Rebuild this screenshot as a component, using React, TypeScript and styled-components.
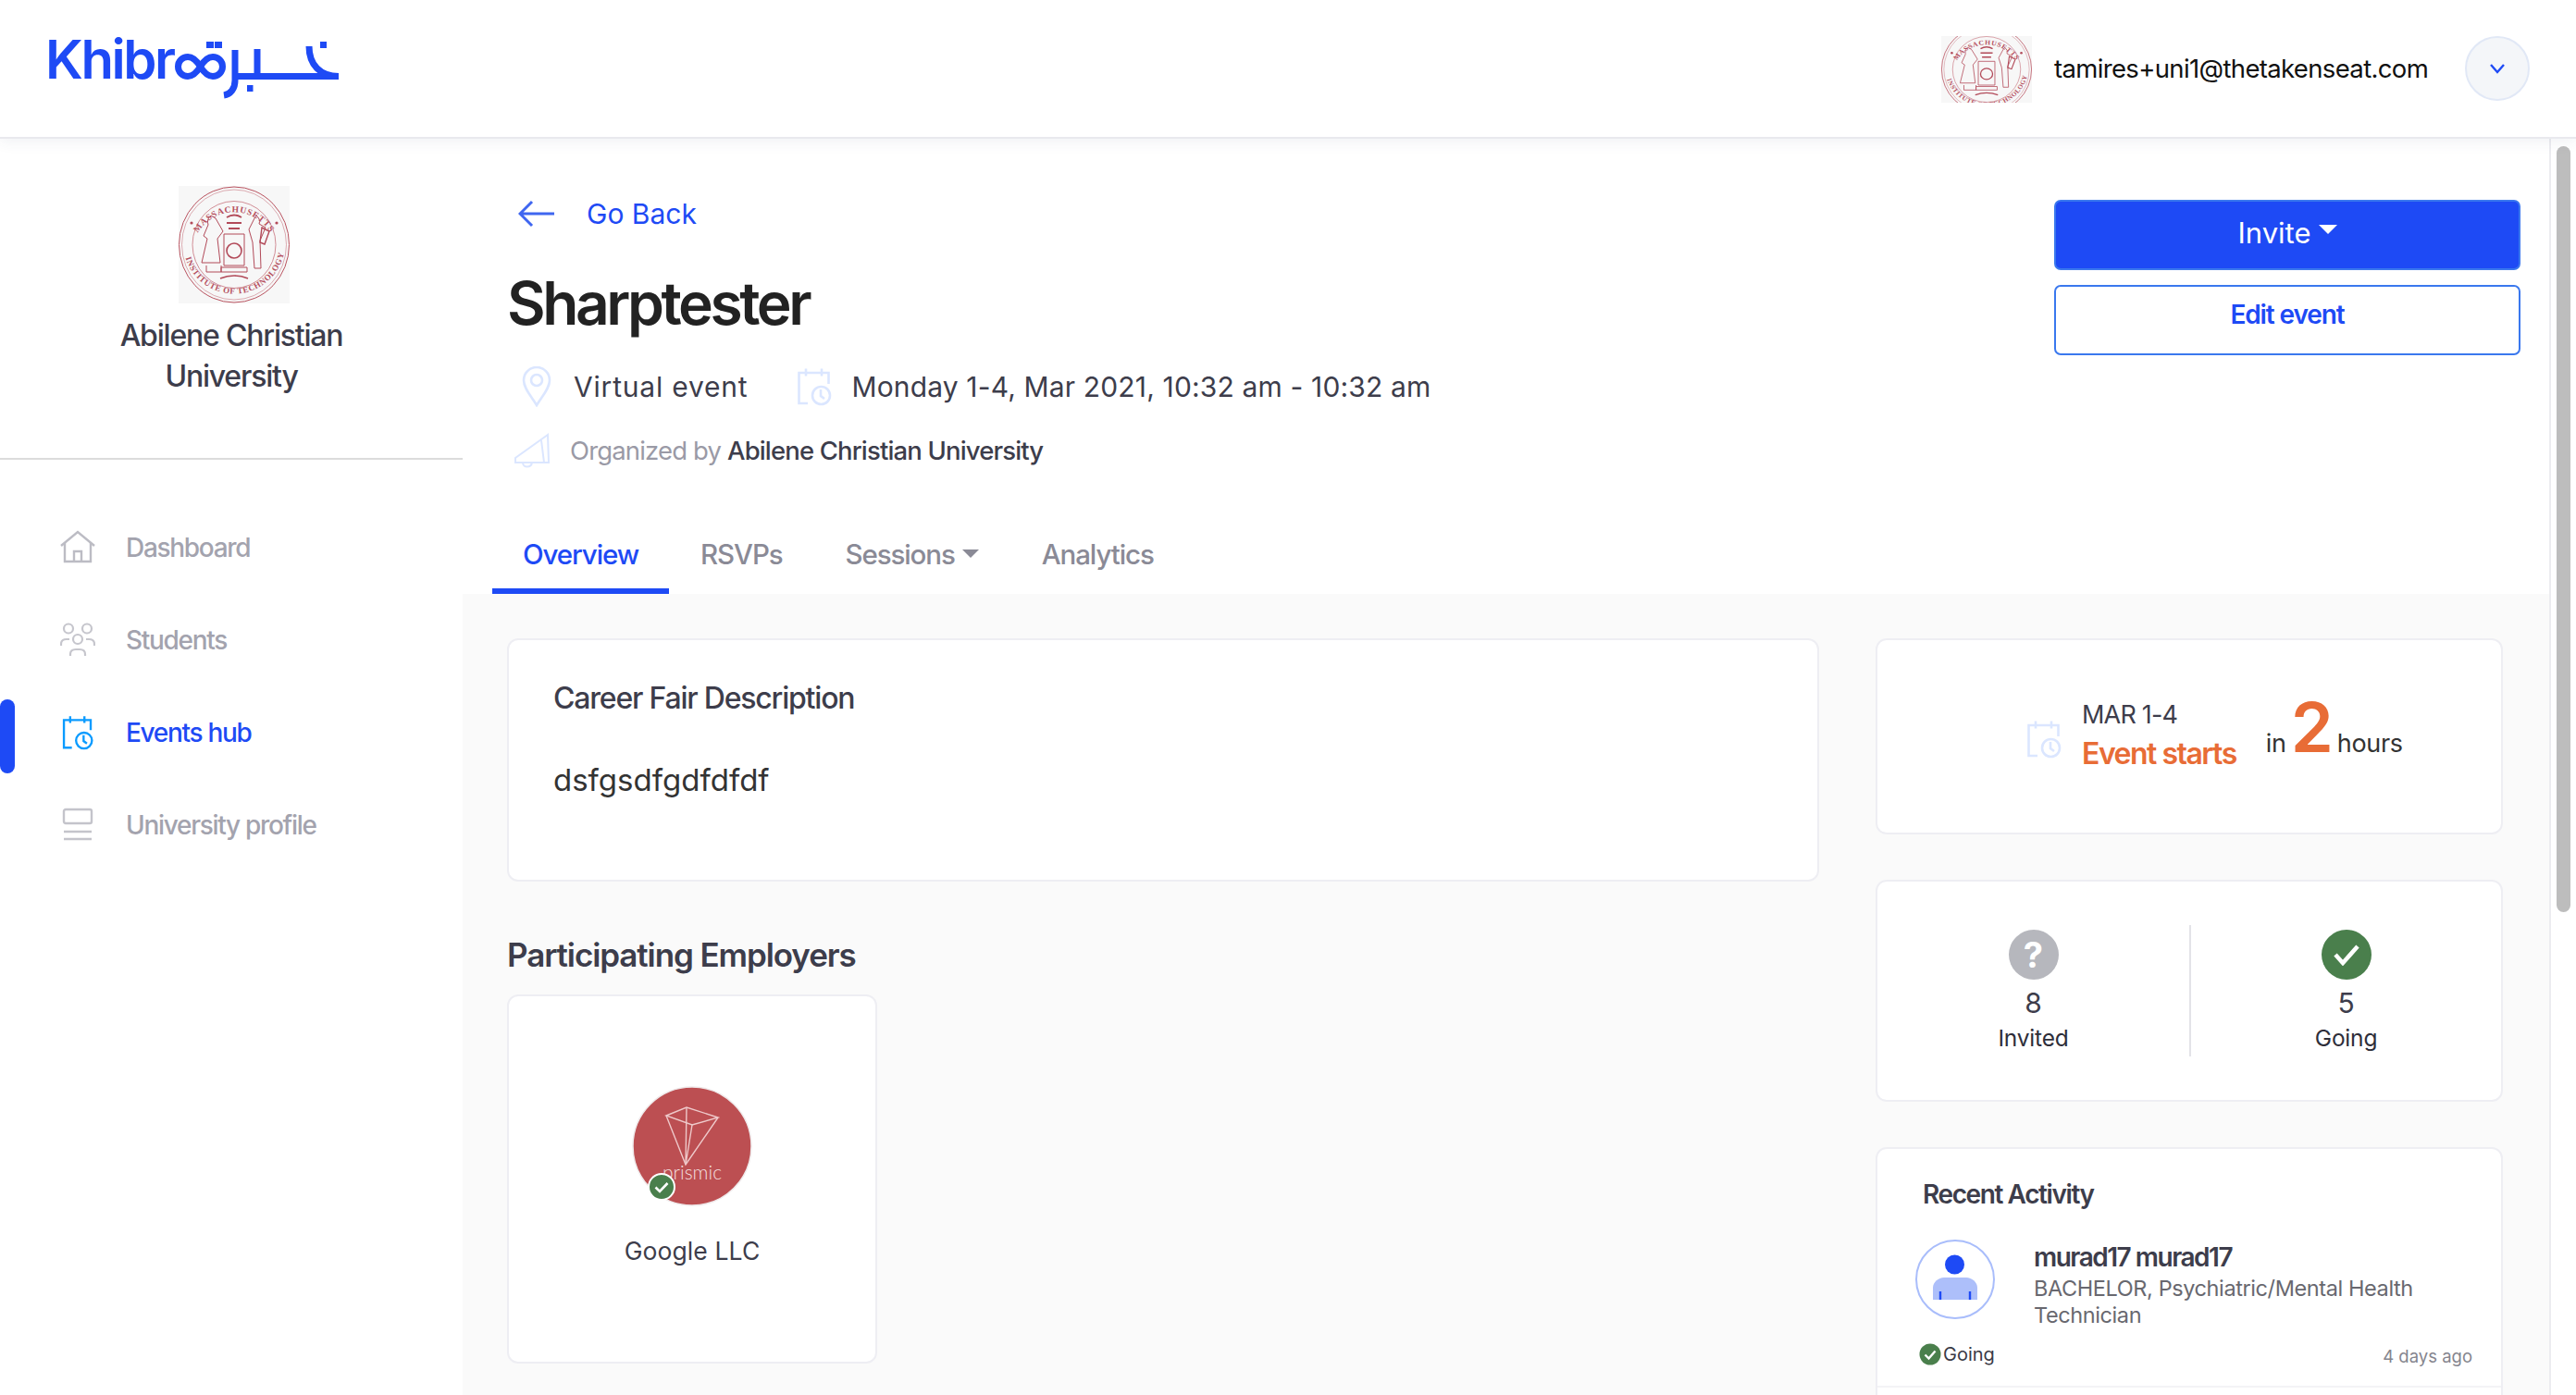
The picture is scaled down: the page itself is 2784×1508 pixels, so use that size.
import { FC } from 'react'
import styled, { createGlobalStyle } from 'styled-components'

const BLUE = '#1e4af5'
const PALE = '#dbe6ff'
const INK = '#3d3d4b'

const GlobalStyle = createGlobalStyle`
  html, body {
    margin: 0;
    height: 100%;
    overflow: hidden;
    background: #fff;
    font-family: Inter, "Liberation Sans", sans-serif;
  }
  * { box-sizing: border-box; }
`

const Seal: FC<{ className?: string }> = ({ className }) => (
  <svg className={className} viewBox="0 0 120 127" preserveAspectRatio="none">
    <defs>
      <path id="seal-top" d="M14 68 A47 50 0 0 1 106 68" />
      <path id="seal-bottom" d="M6 72 A55 55 0 0 0 114 72" />
    </defs>
    <ellipse cx="60" cy="63.5" rx="59.5" ry="62.5" fill="none" stroke="#b9525f" strokeWidth="1" />
    <ellipse cx="60" cy="63.5" rx="56.5" ry="59.5" fill="none" stroke="#c77782" strokeWidth="0.6" />
    <ellipse cx="60" cy="63.5" rx="45" ry="47" fill="none" stroke="#c0606c" strokeWidth="0.7" />
    <text fontFamily="'Liberation Serif', serif" fontSize="9.5" fontWeight="700" fill="#b5505e" letterSpacing="0.8">
      <textPath href="#seal-top" startOffset="14%">MASSACHUSETTS</textPath>
    </text>
    <text fontFamily="'Liberation Serif', serif" fontSize="9" fontWeight="700" fill="#b5505e" letterSpacing="0.6">
      <textPath href="#seal-bottom" startOffset="4%">INSTITUTE OF TECHNOLOGY</textPath>
    </text>
    <g fill="none" stroke="#b24a59" strokeWidth="1">
      <path d="M49 52h22v34H49zM46 88h28v5H46z" />
      <circle cx="60" cy="70" r="8" strokeWidth="1.6" />
      <path d="M52 40h16M54 46h12M52 34q8 -5 16 0" strokeWidth="1.8" />
      <path d="M35 32q-5 4 -3 10l-5 12 4 3-6 26h20l-3-26 6-8-8-14zM30 86v7h16v-7" />
      <path d="M84 32q5 4 3 9l7 4-6 14 1 30h-7l-2-28-4-14 6-12z" />
      <path d="M90 45l8 4-5 14-5-2z" strokeWidth="1.4" />
      <path d="M45 100q15 -6 30 0" strokeWidth="1.6" />
    </g>
    <circle cx="14" cy="40" r="1.6" fill="#b24a59" />
    <circle cx="106" cy="40" r="1.6" fill="#b24a59" />
  </svg>
)

const CalendarClock: FC<{ color: string; className?: string }> = ({ color, className }) => (
  <svg className={className} viewBox="0 0 38 42" fill="none" stroke={color} strokeWidth="2.6">
    <path d="M12 39H2.5V6h32v12" />
    <path d="M10 1.5v8M27 1.5v8" />
    <circle cx="26.5" cy="30.5" r="9.5" />
    <path d="M26 24v7l4 3" />
  </svg>
)

const Page = styled.div`
  height: 1508px;
  display: flex;
  flex-direction: column;
  overflow: hidden;
`

const Header = styled.header`
  position: relative;
  z-index: 2;
  flex: 0 0 150px;
  display: flex;
  align-items: center;
  justify-content: space-between;
  padding: 0 50px 0 49px;
  background: #fff;
  border-bottom: 2px solid #e9e9ee;
  box-shadow: 0 4px 14px rgba(60, 70, 110, 0.07);
`

const Logo = styled.div`
  display: flex;
  align-items: flex-start;
  height: 70px;
  margin-top: -4px;
`

const LogoWord = styled.span`
  width: 136px;
  color: ${BLUE};
  font-size: 58px;
  font-weight: 600;
  line-height: 58px;
  letter-spacing: -2.4px;
  margin-top: -2px;
`

const LogoMark = styled.svg`
  width: 186px;
  height: 70px;
`

const UserArea = styled.div`
  display: flex;
  align-items: center;
`

const UserSeal = styled.div`
  width: 98px;
  height: 72px;
  overflow: hidden;
  background: #f7f7f7;
  display: flex;
  align-items: center;
  justify-content: center;
  margin-top: 2px;

  svg {
    flex: none;
    width: 98px;
    height: 96px;
  }
`

const Email = styled.span`
  margin-left: 24px;
  color: #111;
  font-size: 27.5px;
  letter-spacing: -0.65px;
  width: 444px;
`

const ChevronButton = styled.div`
  width: 70px;
  height: 70px;
  border-radius: 50%;
  background: #f4f6f9;
  border: 2px solid #e1e8f6;
  display: flex;
  align-items: center;
  justify-content: center;
`

const Body = styled.div`
  flex: 1;
  min-height: 0;
  display: flex;
`

const Sidebar = styled.aside`
  flex: 0 0 500px;
  background: #fff;
`

const SchoolBlock = styled.div`
  height: 347px;
  border-bottom: 2px solid #dcdcdc;
  padding-top: 51px;
  display: flex;
  flex-direction: column;
  align-items: center;
`

const SchoolSeal = styled.div`
  width: 120px;
  height: 127px;
  margin-left: 6px;
  background: #f7f7f7;
  svg {
    display: block;
    width: 100%;
    height: 100%;
  }
`

const SchoolName = styled.div`
  margin-top: 13px;
  width: 300px;
  text-align: center;
  color: ${INK};
  font-size: 32px;
  font-weight: 500;
  line-height: 44px;
  letter-spacing: -1.2px;
`

const Nav = styled.nav`
  padding-top: 45px;
`

const NavItem = styled.div<{ $active?: boolean }>`
  position: relative;
  height: 100px;
  display: flex;
  align-items: center;
  padding-left: 65px;
  gap: 33px;
  color: ${(p) => (p.$active ? BLUE : '#a3a3ae')};
  font-size: 28px;
  font-weight: 500;
  letter-spacing: -1.3px;

  ${(p) =>
    p.$active &&
    `&::before {
      content: '';
      position: absolute;
      left: 0;
      top: 14px;
      width: 16px;
      height: 80px;
      border-radius: 8px;
      background: ${BLUE};
    }`}

  svg {
    width: 38px;
    height: 38px;
    flex: none;
  }
`

const Main = styled.main`
  flex: 1;
  min-width: 0;
  display: flex;
  flex-direction: column;
`

const Hero = styled.section`
  position: relative;
  z-index: 1;
  flex: 0 0 492px;
  min-height: 0;
  display: flex;
  justify-content: space-between;
  padding: 66px 31px 0 32px;
  background: #fff;
`

const HeroLeft = styled.div`
  display: flex;
  flex-direction: column;
`

const BackLink = styled.div`
  display: flex;
  align-items: center;
  margin-top: -1px;
  padding-left: 28px;
  gap: 34px;
  color: ${BLUE};
  font-size: 30px;
  height: 32px;
`

const Title = styled.h1`
  margin: 42px 0 0 16px;
  color: #222;
  font-size: 64px;
  font-weight: 600;
  line-height: 78px;
  letter-spacing: -3.4px;
`

const MetaRow = styled.div`
  display: flex;
  align-items: center;
  height: 46px;
  margin: 29px 0 0 32px;
  color: ${INK};
  font-size: 30px;
`

const MetaText = styled.span<{ $gap: number; $spacing?: number }>`
  margin-left: ${(p) => p.$gap}px;
  letter-spacing: ${(p) => p.$spacing ?? 0}px;
`

const CalendarMeta = styled(CalendarClock)`
  width: 38px;
  height: 42px;
  margin-left: 53px;
`

const OrganizerRow = styled.div`
  display: flex;
  align-items: center;
  height: 40px;
  margin: 27px 0 0 23px;
  color: #9a9aa6;
  font-size: 27.5px;

  strong {
    color: ${INK};
    font-weight: 500;
    letter-spacing: -0.85px;
  }
`

const Tabs = styled.div`
  display: flex;
  margin-top: 65px;
`

const Tab = styled.div<{ $active?: boolean; $pad: number }>`
  height: 70px;
  display: flex;
  align-items: center;
  gap: 8px;
  padding: 0 ${(p) => p.$pad}px 11px;
  color: ${(p) => (p.$active ? BLUE : '#8a8a96')};
  font-size: 29.5px;
  font-weight: 500;
  letter-spacing: -1.1px;
  border-bottom: 6px solid ${(p) => (p.$active ? BLUE : 'transparent')};
`

const Caret = styled.i<{ $color: string; $size: number }>`
  width: 0;
  height: 0;
  border-left: ${(p) => p.$size}px solid transparent;
  border-right: ${(p) => p.$size}px solid transparent;
  border-top: ${(p) => p.$size}px solid ${(p) => p.$color};
`

const HeroActions = styled.div`
  width: 504px;
  display: flex;
  flex-direction: column;
  gap: 16px;
`

const ActionButton = styled.div<{ $primary?: boolean }>`
  height: 76px;
  border: 2px solid #3a78ee;
  border-radius: 7px;
  display: flex;
  align-items: center;
  justify-content: center;
  gap: 8px;
  padding-bottom: ${(p) => (p.$primary ? 6 : 12)}px;
  background: ${(p) => (p.$primary ? BLUE : '#fff')};
  color: ${(p) => (p.$primary ? '#fff' : BLUE)};
  font-size: ${(p) => (p.$primary ? 31 : 28)}px;
  font-weight: ${(p) => (p.$primary ? 400 : 600)};
  letter-spacing: ${(p) => (p.$primary ? 0 : -1.1)}px;

  ${Caret} {
    margin-top: -6px;
  }
`

const Content = styled.section`
  flex: 1;
  min-height: 0;
  overflow: hidden;
  background: #fafafa;
  display: grid;
  grid-template-columns: 1418px 678px;
  column-gap: 61px;
  padding: 48px 0 0 48px;
`

const Card = styled.div`
  background: #fff;
  border: 2px solid #eeeef3;
  border-radius: 12px;
`

const Column = styled.div`
  display: flex;
  flex-direction: column;
  align-items: flex-start;
`

const RightColumn = styled.div`
  display: flex;
  flex-direction: column;
  gap: 49px;
`

const DescriptionCard = styled(Card)`
  width: 100%;
  height: 263px;
  padding: 43px 48px;
`

const CardTitle = styled.h2`
  margin: 0;
  color: ${INK};
  font-size: 32px;
  font-weight: 500;
  line-height: 40px;
  letter-spacing: -1.2px;
`

const DescriptionText = styled.p`
  margin: 47px 0 0;
  color: #333;
  font-size: 33px;
  line-height: 42px;
`

const SectionTitle = styled.h2`
  margin: 58px 0 22px;
  color: ${INK};
  font-size: 35px;
  font-weight: 600;
  line-height: 42px;
  letter-spacing: -1.1px;
`

const EmployerCard = styled(Card)`
  width: 400px;
  height: 399px;
  display: flex;
  flex-direction: column;
  align-items: center;
  padding-top: 97px;
`

const EmployerLogo = styled.div`
  position: relative;
  width: 130px;
  height: 130px;
`

const EmployerBadge = styled.div`
  position: absolute;
  left: 17px;
  bottom: 6px;
  width: 30px;
  height: 30px;
  border-radius: 50%;
  border: 2px solid #fff;
  background: #4a7f4c;
  display: flex;
  align-items: center;
  justify-content: center;
`

const EmployerName = styled.div`
  margin-top: 30px;
  color: ${INK};
  font-size: 26.5px;
  line-height: 36px;
  letter-spacing: 0.1px;
`

const CountdownCard = styled(Card)`
  height: 212px;
  display: flex;
  padding: 64px 0 0 161px;
`

const CountdownIcon = styled(CalendarClock)`
  width: 38px;
  height: 42px;
  margin-top: 22px;
`

const CountdownDate = styled.div`
  margin-left: 22px;
  display: flex;
  flex-direction: column;
`

const DateLabel = styled.span`
  color: ${INK};
  font-size: 27px;
  line-height: 34px;
  letter-spacing: -0.8px;
`

const StartsLabel = styled.span`
  margin-top: 5px;
  color: #e86c36;
  font-size: 32px;
  font-weight: 600;
  line-height: 40px;
  letter-spacing: -1.5px;
`

const Hours = styled.div`
  margin: -8px 0 0 32px;
  display: flex;
  align-items: baseline;
  gap: 5px;
  height: 76px;
  color: #333;
  font-size: 27px;
  line-height: 76px;
  letter-spacing: -0.3px;
`

const BigNumber = styled.span`
  color: #e86c36;
  font-size: 74px;
  font-weight: 600;
  line-height: 76px;
  letter-spacing: -1px;
`

const CountCard = styled(Card)`
  height: 240px;
  display: grid;
  grid-template-columns: 1fr 1fr;
  padding: 47px 0 0;
`

const CountCell = styled.div<{ $divided?: boolean }>`
  height: 142px;
  display: flex;
  flex-direction: column;
  align-items: center;
  padding-top: 5px;
  border-left: ${(p) => (p.$divided ? '2px solid #e3e3e8' : 'none')};
`

const CountIcon = styled.div<{ $color: string }>`
  width: 54px;
  height: 54px;
  border-radius: 50%;
  background: ${(p) => p.$color};
  color: #fff;
  display: flex;
  align-items: center;
  justify-content: center;
  font-size: 38px;
  font-weight: 700;
`

const CountValue = styled.div`
  margin-top: 6px;
  color: ${INK};
  font-size: 30px;
  line-height: 38px;
`

const CountLabel = styled.div`
  color: #2e2e3a;
  font-size: 24.5px;
  line-height: 38px;
  letter-spacing: -0.2px;
`

const ActivityCard = styled(Card)`
  height: 400px;
  padding: 30px 0 0;
`

const ActivityTitle = styled.h3`
  margin: 0 0 0 49px;
  color: ${INK};
  font-size: 28px;
  font-weight: 600;
  line-height: 38px;
  letter-spacing: -1.4px;
`

const ActivityRow = styled.div`
  display: flex;
  margin: 31px 0 0 41px;
`

const Avatar = styled.div`
  flex: none;
  width: 86px;
  height: 86px;
  border-radius: 50%;
  border: 2px solid #a9bdfb;
  margin-top: -1px;

  svg {
    display: block;
    width: 100%;
    height: 100%;
  }
`

const ActivityInfo = styled.div`
  margin: 0 0 0 42px;
  width: 440px;
`

const ActivityName = styled.div`
  color: ${INK};
  font-size: 28px;
  font-weight: 600;
  line-height: 36px;
  letter-spacing: -1.5px;
`

const ActivityDetail = styled.div`
  color: #68686f;
  font-size: 23.5px;
  line-height: 29px;
  letter-spacing: -0.4px;
  margin-top: 1px;
`

const ActivityFooter = styled.div`
  display: flex;
  align-items: center;
  justify-content: space-between;
  height: 40px;
  margin: 8px 31px 0 45px;
`

const GoingStatus = styled.div`
  display: flex;
  align-items: center;
  gap: 2px;
  color: #3a3a46;
  font-size: 20px;

  svg {
    width: 24px;
    height: 24px;
  }
`

const TimeAgo = styled.div`
  color: #85858e;
  font-size: 18.5px;
  padding-top: 4px;
`

const ActivityDivider = styled.div`
  height: 2px;
  margin-top: 14px;
  background: #f3f3f6;
`

const ScrollTrack = styled.div`
  flex: 0 0 29px;
  background: #fff;
  border-left: 2px solid #ececf0;
  padding: 8px 6px 0;
`

const ScrollThumb = styled.div`
  height: 828px;
  border-radius: 8px;
  background: #bdbdbd;
`

const navItems = [
  {
    label: 'Dashboard',
    icon: (
      <svg viewBox="0 0 38 38" fill="none" stroke="#bcbcc4" strokeWidth="2.4">
        <path d="M1 17L19 2l18 15" />
        <path d="M5 14v20h28V14" />
        <path d="M15 34V23h8v11" />
      </svg>
    )
  },
  {
    label: 'Students',
    icon: (
      <svg viewBox="0 0 38 38" fill="none" stroke="#c6c6cd" strokeWidth="2.2">
        <circle cx="9" cy="6.5" r="5" />
        <circle cx="29" cy="6.5" r="5" />
        <circle cx="19" cy="18" r="5" />
        <path d="M1 25v-2q0-5 6-5h3M37 25v-2q0-5-6-5h-3" />
        <path d="M11 36v-2q0-5 6-5h4q6 0 6 5v2" />
      </svg>
    )
  },
  { label: 'Events hub', active: true, icon: <CalendarClock color="#0a9bff" /> },
  {
    label: 'University profile',
    icon: (
      <svg viewBox="0 0 38 38" fill="none" stroke="#c4c4cb" strokeWidth="2.4">
        <rect x="4" y="2" width="30" height="15" rx="2" />
        <path d="M4 26h30M4 34h30" />
      </svg>
    )
  }
]

const tabs = [
  { label: 'Overview', active: true, pad: 33 },
  { label: 'RSVPs', pad: 34 },
  { label: 'Sessions', caret: true, pad: 34 },
  { label: 'Analytics', pad: 34 }
]

const App: FC = () => (
  <Page>
    <GlobalStyle />
    <Header>
      <Logo>
        <LogoWord>Khibr</LogoWord>
        <LogoMark viewBox="0 0 186 70" fill="none" stroke={BLUE} strokeWidth="7">
          <path d="M31.5 35C26 26 21 24.5 18 24.5a10.5 10.5 0 0 0 0 21c3 0 8-1.5 13.5-10.5s10.5-10.5 13.5-10.5a10.5 10.5 0 0 1 0 21c-3 0-8-1.5-13.5-10.5z" />
          <path d="M38 8h8v7h-8zM47 8h8v7h-8z" fill={BLUE} stroke="none" />
          <path d="M57 66c7-1 12-7 12-16V17" />
          <path d="M66 45.5h115" />
          <path d="M93 16v30" />
          <path d="M149 13c0 20 12 32.5 32 32.5" />
          <path d="M161 8h7v7h-7zM82 55h6.5v7H82z" fill={BLUE} stroke="none" />
        </LogoMark>
      </Logo>
      <UserArea>
        <UserSeal>
          <Seal />
        </UserSeal>
        <Email>tamires+uni1@thetakenseat.com</Email>
        <ChevronButton>
          <svg width="20" height="14" viewBox="0 0 20 14" fill="none" stroke={BLUE} strokeWidth="2.4">
            <path d="M3 3l7 8 7-8" />
          </svg>
        </ChevronButton>
      </UserArea>
    </Header>
    <Body>
      <Sidebar>
        <SchoolBlock>
          <SchoolSeal>
            <Seal />
          </SchoolSeal>
          <SchoolName>Abilene Christian University</SchoolName>
        </SchoolBlock>
        <Nav>
          {navItems.map((item) => (
            <NavItem key={item.label} $active={item.active}>
              {item.icon}
              {item.label}
            </NavItem>
          ))}
        </Nav>
      </Sidebar>
      <Main>
        <Hero>
          <HeroLeft>
            <BackLink>
              <svg width="40" height="30" viewBox="0 0 40 30" fill="none" stroke="#3f66f0" strokeWidth="3">
                <path d="M39 15H3M15 2L2 15l13 13" />
              </svg>
              Go Back
            </BackLink>
            <Title>Sharptester</Title>
            <MetaRow>
              <svg width="32" height="44" viewBox="0 0 32 44" fill="none" stroke={PALE} strokeWidth="2.6">
                <path d="M16 42C10 32 2 24 2 15a14 14 0 0 1 28 0c0 9-8 17-14 27z" />
                <circle cx="16" cy="15" r="6" />
              </svg>
              <MetaText $gap={24} $spacing={0.8}>
                Virtual event
              </MetaText>
              <CalendarMeta color={PALE} />
              <MetaText $gap={21} $spacing={0.15}>
                Monday 1-4, Mar 2021, 10:32 am - 10:32 am
              </MetaText>
            </MetaRow>
            <OrganizerRow>
              <svg width="40" height="38" viewBox="0 0 40 38" fill="none" stroke={PALE} strokeWidth="2">
                <path d="M37 2L2 27v5h36z" />
                <path d="M30 8l3 24M10 32c0 6 9 6 10 0" />
              </svg>
              <MetaText $gap={21} $spacing={-0.85}>
                Organized by <strong>Abilene Christian University</strong>
              </MetaText>
            </OrganizerRow>
            <Tabs>
              {tabs.map((tab) => (
                <Tab key={tab.label} $active={tab.active} $pad={tab.pad}>
                  {tab.label}
                  {tab.caret && <Caret $color="#8a8a96" $size={9} />}
                </Tab>
              ))}
            </Tabs>
          </HeroLeft>
          <HeroActions>
            <ActionButton $primary>
              Invite
              <Caret $color="#fff" $size={10} />
            </ActionButton>
            <ActionButton>Edit event</ActionButton>
          </HeroActions>
        </Hero>
        <Content>
          <Column>
            <DescriptionCard>
              <CardTitle>Career Fair Description</CardTitle>
              <DescriptionText>dsfgsdfgdfdfdf</DescriptionText>
            </DescriptionCard>
            <SectionTitle>Participating Employers</SectionTitle>
            <EmployerCard>
              <EmployerLogo>
                <svg width="130" height="130" viewBox="0 0 130 130">
                  <circle cx="65" cy="65" r="64" fill="#bc4f52" stroke="#efe9ea" strokeWidth="1.5" />
                  <g fill="none" stroke="#eec9ca" strokeWidth="1.4">
                    <path d="M37 32L59 23l34 11-28 8z" />
                    <path d="M37 32l21 53 35-51" />
                    <path d="M59 23l-1 62 7-43" />
                  </g>
                  <text x="65" y="101" textAnchor="middle" fontFamily="Lato, sans-serif" fontWeight="300" fontSize="21" fill="#f3dede">
                    prismic
                  </text>
                </svg>
                <EmployerBadge>
                  <svg width="16" height="13" viewBox="0 0 16 13" fill="none" stroke="#fff" strokeWidth="2.6">
                    <path d="M1.5 6.5l4.5 4.5 8.5-9" />
                  </svg>
                </EmployerBadge>
              </EmployerLogo>
              <EmployerName>Google LLC</EmployerName>
            </EmployerCard>
          </Column>
          <RightColumn>
            <CountdownCard>
              <CountdownIcon color={PALE} />
              <CountdownDate>
                <DateLabel>MAR 1-4</DateLabel>
                <StartsLabel>Event starts</StartsLabel>
              </CountdownDate>
              <Hours>
                in
                <BigNumber>2</BigNumber>
                hours
              </Hours>
            </CountdownCard>
            <CountCard>
              <CountCell>
                <CountIcon $color="#b6b7bd">?</CountIcon>
                <CountValue>8</CountValue>
                <CountLabel>Invited</CountLabel>
              </CountCell>
              <CountCell $divided>
                <CountIcon $color="#4a7f4c">
                  <svg width="30" height="24" viewBox="0 0 30 24" fill="none" stroke="#fff" strokeWidth="4.5">
                    <path d="M3 12l8 9L27 3" />
                  </svg>
                </CountIcon>
                <CountValue>5</CountValue>
                <CountLabel>Going</CountLabel>
              </CountCell>
            </CountCard>
            <ActivityCard>
              <ActivityTitle>Recent Activity</ActivityTitle>
              <ActivityRow>
                <Avatar>
                  <svg viewBox="0 0 82 82">
                    <circle cx="40.5" cy="25" r="10.5" fill={BLUE} />
                    <path d="M17 63V50c0-6 6-11 12-11h24c6 0 12 5 12 11v13z" fill="#adbffa" />
                    <path d="M25 54v9M57 54v9" stroke={BLUE} strokeWidth="2.4" />
                  </svg>
                </Avatar>
                <ActivityInfo>
                  <ActivityName>murad17 murad17</ActivityName>
                  <ActivityDetail>BACHELOR, Psychiatric/Mental Health Technician</ActivityDetail>
                </ActivityInfo>
              </ActivityRow>
              <ActivityFooter>
                <GoingStatus>
                  <svg viewBox="0 0 24 24">
                    <circle cx="12" cy="12" r="11.5" fill="#4a7f4c" />
                    <path d="M6.5 12.5l4 4 7-8" fill="none" stroke="#fff" strokeWidth="2.4" />
                  </svg>
                  Going
                </GoingStatus>
                <TimeAgo>4 days ago</TimeAgo>
              </ActivityFooter>
              <ActivityDivider />
            </ActivityCard>
          </RightColumn>
        </Content>
      </Main>
      <ScrollTrack>
        <ScrollThumb />
      </ScrollTrack>
    </Body>
  </Page>
)

export default App
